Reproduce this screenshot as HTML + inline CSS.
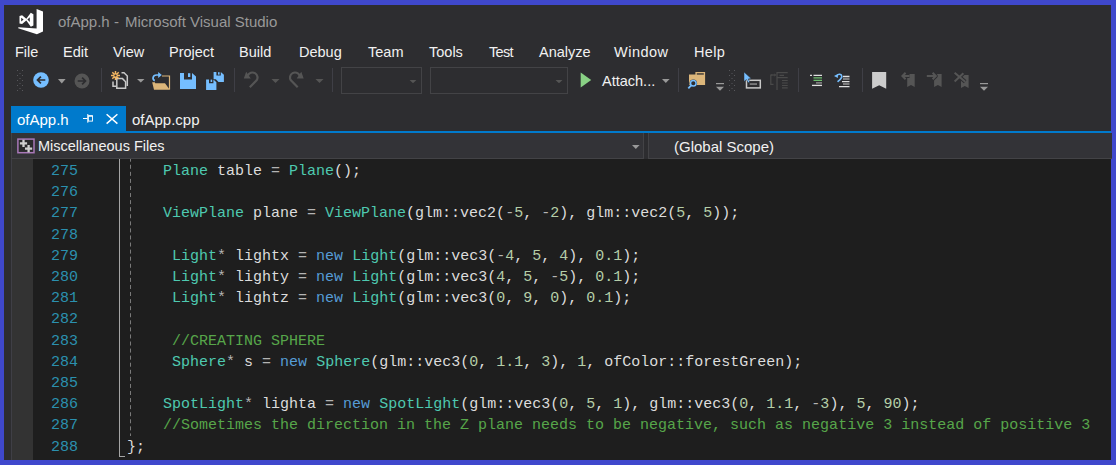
<!DOCTYPE html>
<html><head><meta charset="utf-8">
<style>
html,body{margin:0;padding:0;}
body{width:1116px;height:465px;background:#3f48cc;position:relative;overflow:hidden;font-family:"Liberation Sans",sans-serif;}
.a{position:absolute;}
.t{position:absolute;white-space:pre;line-height:1;}
.menu{color:#f1f1f1;font-size:14.5px;top:45px;}
.code{font-family:"Liberation Mono",monospace;font-size:15px;white-space:pre;color:#dcdcdc;}
.ln{position:absolute;left:33px;width:45px;text-align:right;color:#2b91af;font-family:"Liberation Mono",monospace;font-size:15px;}
.ty{color:#4ec9b0}.kw{color:#569cd6}.nm{color:#b5cea8}.cm{color:#57a64a}.op{color:#b4b4b4}
</style></head><body>
<div class="a" style="left:4px;top:5px;width:1107px;height:455px;background:#2d2d30"></div>

<!-- title bar -->
<div class="t" id="title" style="left:58px;top:14px;color:#999;font-size:15px;">ofApp.h -</div>
<div class="t" id="title2" style="left:125px;top:14px;color:#999;font-size:15px;">Microsoft Visual Studio</div>

<!-- menu -->
<div class="t menu" id="m_file" style="left:15px">File</div>
<div class="t menu" style="left:63px">Edit</div>
<div class="t menu" style="left:113px">View</div>
<div class="t menu" style="left:169px">Project</div>
<div class="t menu" style="left:239px">Build</div>
<div class="t menu" style="left:299px">Debug</div>
<div class="t menu" style="left:368px">Team</div>
<div class="t menu" style="left:429px">Tools</div>
<div class="t menu" style="left:489px;letter-spacing:-0.7px">Test</div>
<div class="t menu" style="left:539px">Analyze</div>
<div class="t menu" style="left:614px;letter-spacing:0.5px">Window</div>
<div class="t menu" style="left:694px;letter-spacing:0.3px">Help</div>

<!-- toolbar text -->
<div class="t" id="attach" style="left:602px;top:74px;color:#f1f1f1;font-size:14.5px;">Attach...</div>

<!-- tabs -->
<div class="a" style="left:11px;top:106px;width:115px;height:27px;background:#007acc"></div>
<div class="a" style="left:11px;top:131px;width:1100px;height:2px;background:#007acc"></div>
<div class="t" id="tab1" style="left:17px;top:112px;color:#fff;font-size:15px;">ofApp.h</div>
<div class="t" id="tab2" style="left:132px;top:112px;color:#f1f1f1;font-size:15px;">ofApp.cpp</div>

<!-- nav bar -->
<div class="a" style="left:11px;top:133px;width:631px;height:25px;background:#333337;border-left:1px solid #434346;border-bottom:1px solid #434346;border-right:1px solid #434346;"></div>
<div class="a" style="left:648px;top:133px;width:463px;height:25px;background:#333337;border-left:1px solid #434346;border-bottom:1px solid #434346;"></div>
<div class="t" id="misc" style="left:38px;top:139px;color:#f1f1f1;font-size:14.5px;">Miscellaneous Files</div>
<div class="t" id="glob" style="left:674px;top:139px;color:#f1f1f1;font-size:15px;">(Global Scope)</div>

<!-- editor -->
<div class="a" style="left:11px;top:159px;width:1px;height:301px;background:#3f3f46"></div>
<div class="a" style="left:12px;top:159px;width:21px;height:301px;background:#333333"></div>
<div class="a" style="left:33px;top:159px;width:1078px;height:301px;background:#1e1e1e"></div>

<!-- code -->
<div class="ln" style="top:161px;line-height:21.2px;">275<br>276<br>277<br>278<br>279<br>280<br>281<br>282<br>283<br>284<br>285<br>286<br>287<br>288</div>
<div class="a code" id="code" style="left:127px;top:161px;line-height:21.2px;"><span class="op">    </span><span class="ty">Plane</span> table <span class="op">=</span> <span class="ty">Plane</span>();

    <span class="ty">ViewPlane</span> plane <span class="op">=</span> <span class="ty">ViewPlane</span>(glm::vec2(<span class="op">-</span><span class="nm">5</span>, <span class="op">-</span><span class="nm">2</span>), glm::vec2(<span class="nm">5</span>, <span class="nm">5</span>));

     <span class="ty">Light</span><span class="op">*</span> lightx <span class="op">=</span> <span class="kw">new</span> <span class="ty">Light</span>(glm::vec3(<span class="op">-</span><span class="nm">4</span>, <span class="nm">5</span>, <span class="nm">4</span>), <span class="nm">0.1</span>);
     <span class="ty">Light</span><span class="op">*</span> lighty <span class="op">=</span> <span class="kw">new</span> <span class="ty">Light</span>(glm::vec3(<span class="nm">4</span>, <span class="nm">5</span>, <span class="op">-</span><span class="nm">5</span>), <span class="nm">0.1</span>);
     <span class="ty">Light</span><span class="op">*</span> lightz <span class="op">=</span> <span class="kw">new</span> <span class="ty">Light</span>(glm::vec3(<span class="nm">0</span>, <span class="nm">9</span>, <span class="nm">0</span>), <span class="nm">0.1</span>);

     <span class="cm">//CREATING SPHERE</span>
     <span class="ty">Sphere</span><span class="op">*</span> s <span class="op">=</span> <span class="kw">new</span> <span class="ty">Sphere</span>(glm::vec3(<span class="nm">0</span>, <span class="nm">1.1</span>, <span class="nm">3</span>), <span class="nm">1</span>, ofColor::forestGreen);

    <span class="ty">SpotLight</span><span class="op">*</span> lighta <span class="op">=</span> <span class="kw">new</span> <span class="ty">SpotLight</span>(glm::vec3(<span class="nm">0</span>, <span class="nm">5</span>, <span class="nm">1</span>), glm::vec3(<span class="nm">0</span>, <span class="nm">1.1</span>, <span class="op">-</span><span class="nm">3</span>), <span class="nm">5</span>, <span class="nm">90</span>);
    <span class="cm">//Sometimes the direction in the Z plane needs to be negative, such as negative 3 instead of positive 3</span>
};</div>

<!-- ICONS overlay -->
<svg class="a" style="left:0;top:0" width="1116" height="465" viewBox="0 0 1116 465">
  <!-- VS logo -->
  <path fill="#fff" d="M36.6 8.9 L43 11.5 L43 31.5 L36.9 34.2 L18.2 28.2 L18.4 27.2 L36.6 28.4 Z"/>
  <path fill="#fff" fill-rule="evenodd" d="M19.5 16 L22.1 15.2 L26.3 18.7 L30.8 12.8 L33.4 14.2 L33.4 25.6 L30.8 26.8 L26.3 20.5 L22.1 24 L19.5 23.4 Z M21.2 17.8 L23.6 19.6 L21.2 21.4 Z M27.4 19.6 L29.8 17.2 L29.8 22 Z"/>

  <!-- toolbar grip -->
  <g fill="#58585c">
    <rect x="17" y="70" width="1" height="1"/><rect x="22" y="70" width="1" height="1"/>
    <rect x="17" y="75" width="1" height="1"/><rect x="22" y="75" width="1" height="1"/>
    <rect x="17" y="80" width="1" height="1"/><rect x="22" y="80" width="1" height="1"/>
    <rect x="17" y="85" width="1" height="1"/><rect x="22" y="85" width="1" height="1"/>
    <rect x="17" y="90" width="1" height="1"/><rect x="22" y="90" width="1" height="1"/>
    <rect x="19.5" y="73" width="1" height="1"/><rect x="19.5" y="78" width="1" height="1"/>
    <rect x="19.5" y="83" width="1" height="1"/><rect x="19.5" y="88" width="1" height="1"/>
  </g>
  <!-- back / forward -->
  <circle cx="41" cy="80" r="7.8" fill="#75beff"/>
  <path d="M45.3 80 H37.8 M40.9 76.6 L37.5 80 L40.9 83.4" stroke="#2d2d30" stroke-width="1.7" fill="none"/>
  <path d="M58 79 H65.6 L61.8 83.4 Z" fill="#999"/>
  <circle cx="82" cy="81" r="7.5" fill="#555"/>
  <path d="M77.7 81 H85.2 M82.1 77.6 L85.5 81 L82.1 84.4" stroke="#2d2d30" stroke-width="1.7" fill="none"/>
  <!-- separators -->
  <g fill="#3f3f46">
    <rect x="101" y="68" width="1" height="24"/>
    <rect x="234" y="68" width="1" height="24"/>
    <rect x="332" y="68" width="1" height="24"/>
    <rect x="678" y="68" width="1" height="24"/>
    <rect x="798" y="68" width="1" height="24"/>
    <rect x="862" y="68" width="1" height="24"/>
  </g>

  <!-- new project -->
  <g stroke="#c8c8c8" stroke-width="1.5" fill="none">
    <path d="M113 81.5 V86.2 H116"/>
    <path d="M121.5 72.8 H124 L127.3 76 V86"/>
    <path d="M116.8 88.2 V78.6 H122.5 L125.6 81.7 V88.2 Z" fill="#2d2d30"/>
  </g>
  <g stroke="#f2b562" stroke-width="1.5">
    <path d="M115.5 71 V80 M111 75.5 H120 M112.3 72.3 L118.7 78.7 M118.7 72.3 L112.3 78.7"/>
  </g>
  <circle cx="115.5" cy="75.5" r="1.1" fill="#2d2d30"/>
  <path d="M137 79 H144.5 L140.75 82.6 Z" fill="#999"/>
  <!-- open folder -->
  <path d="M162 76 H169.5 V89.5" stroke="#dcb67a" stroke-width="1.2" fill="none"/>
  <path d="M152.2 82.3 H154.8 L155.3 83.3 H165 L169.8 89.8 H154 Z" fill="#dcb67a"/>
  <path d="M154.8 80.6 C152 79.5 152.5 75.2 156.5 75 H160" stroke="#75beff" stroke-width="1.7" fill="none"/>
  <path d="M158.2 72 L161.8 75 L158.2 78 Z" fill="#75beff"/>
  <!-- save -->
  <path d="M180 73 H184 V79.6 H192 V73 L196 76.6 V89 H180 Z" fill="#75beff"/>
  <rect x="188" y="73.2" width="2.3" height="3.8" fill="#75beff"/>
  <!-- save all -->
  <path d="M213.6 72 H216.4 V75.5 H220.8 V72 L223.9 74.8 V81.9 H218.5 L215.8 79.3 H213.6 Z" fill="#75beff"/>
  <rect x="218" y="72.2" width="1.6" height="2.4" fill="#75beff"/>
  <path d="M206.1 79.4 H209 V83.2 H213.4 V79.4 L216.4 82.2 V89.9 H206.1 Z" fill="#75beff" stroke="#2d2d30" stroke-width="0.8" paint-order="stroke"/>
  <rect x="210.6" y="79.6" width="1.6" height="2.4" fill="#75beff"/>
  <!-- undo / redo -->
  <g id="undo">
    <path d="M246.2 71.8 L243.8 78.6 L250.8 78.6 Z" fill="#555"/>
    <path d="M247.9 75.6 A5 5 0 1 1 256.6 80.4 L249.8 87.2" stroke="#555" stroke-width="2.2" fill="none"/>
  </g>
  <use href="#undo" transform="translate(547.5 0) scale(-1 1)"/>
  <path d="M271.5 79 H279.5 L275.5 83 Z M315.5 79 H323.5 L319.5 83 Z" fill="#555"/>
  <!-- combos -->
  <rect x="341.5" y="67.5" width="80" height="26" fill="none" stroke="#434346"/>
  <path d="M409.6 80 H416.4 L413 83.3 Z" fill="#555"/>
  <rect x="430.5" y="67.5" width="137" height="26" fill="none" stroke="#434346"/>
  <path d="M555.5 80 H562.5 L559 83.3 Z" fill="#555"/>
  <!-- play -->
  <path d="M580.7 72.6 V87.4 L591.2 80 Z" fill="#89d185"/>
  <path d="M662 79 H669.6 L665.8 83 Z" fill="#999"/>
  <!-- folder search -->
  <path d="M689 74.4 H695.4 V72 H705.1 V85 H689 Z" fill="#dcb67a"/>
  <rect x="696.8" y="73.3" width="7" height="1.3" fill="#2d2d30"/>
  <circle cx="693.3" cy="83.2" r="3.8" fill="#2d2d30"/>
  <circle cx="693.3" cy="83.2" r="2.8" fill="none" stroke="#75beff" stroke-width="1.5"/>
  <path d="M691.2 85.4 L688.3 88.4" stroke="#75beff" stroke-width="1.8"/>
  <!-- overflow 1 -->
  <rect x="716" y="83" width="8" height="1.2" fill="#999"/>
  <path d="M716 86.8 H724 L720 90.8 Z" fill="#999"/>
  <!-- grip 2 -->
  <g fill="#58585c">
    <rect x="729" y="70" width="1" height="1"/><rect x="734" y="70" width="1" height="1"/>
    <rect x="729" y="75" width="1" height="1"/><rect x="734" y="75" width="1" height="1"/>
    <rect x="729" y="80" width="1" height="1"/><rect x="734" y="80" width="1" height="1"/>
    <rect x="729" y="85" width="1" height="1"/><rect x="734" y="85" width="1" height="1"/>
    <rect x="729" y="90" width="1" height="1"/><rect x="734" y="90" width="1" height="1"/>
    <rect x="731.5" y="73" width="1" height="1"/><rect x="731.5" y="78" width="1" height="1"/>
    <rect x="731.5" y="83" width="1" height="1"/><rect x="731.5" y="88" width="1" height="1"/>
  </g>
  <!-- cursor box -->
  <rect x="746.5" y="80.3" width="13.8" height="7.6" fill="none" stroke="#c8c8c8" stroke-width="1.5"/>
  <rect x="749.7" y="83.4" width="7.3" height="1.3" fill="#999"/>
  <path d="M744 72 V81.6 L746.4 79.6 L748.2 82.8 L749.8 82 L748.2 79 L751.2 78.6 Z" fill="#75beff" stroke="#2d2d30" stroke-width="0.5"/>
  <!-- disabled icon -->
  <g fill="none" stroke="#4a4a4a" stroke-width="1.2">
    <path d="M772.5 75 H770.8 V84.3 H773.5"/>
    <path d="M771 75 H775.5"/>
    <path d="M777 72 V90 M777 72.6 H787.7 M779.5 75.3 H784 M777 77.6 H787.7 M782 80.5 H787.7 M782 83 H787.7 M782 85.5 H787.7 M782 87.8 H787.7"/>
  </g>
  <path d="M774.5 73.3 L776 75 L774.5 76.7 Z" fill="#4a4a4a"/>
  <!-- comment -->
  <g stroke-width="1.3">
    <path d="M810 75.3 H812 M813.5 75.3 H822" stroke="#e0e0e0"/>
    <path d="M813.5 77.8 H822 M813.5 80.4 H822" stroke="#6dbf6d"/>
    <path d="M816 82.9 H822" stroke="#999"/>
    <path d="M812 85.4 H822" stroke="#e0e0e0"/>
  </g>
  <!-- uncomment -->
  <g stroke-width="1.3">
    <path d="M843 76.5 H849.5 M842 81.6 H849.5 M839 86.6 H849.5" stroke="#e0e0e0"/>
    <path d="M843 79 H849.5 M843 84 H849.5" stroke="#999"/>
  </g>
  <path d="M836.8 75.8 C838.3 73.3 841.6 73.9 841.8 76.3 C842 78.5 839.5 80.2 837.6 81.8" stroke="#75beff" stroke-width="1.6" fill="none"/>
  <path d="M834 76 L837.8 74 L837.9 77.9 Z" fill="#75beff"/>
  <!-- bookmarks -->
  <path d="M872.1 72.1 H886.2 V88.8 L879.2 85.2 L872.1 88.8 Z" fill="#cccccc"/>
  <g fill="#555">
    <path d="M907.2 73.9 H914.7 V87.1 L911 84.9 L907.2 87.1 Z"/>
    <path d="M934.1 73.9 H941.6 V87.1 L937.9 84.9 L934.1 87.1 Z"/>
    <path d="M961 75 H968.6 V88 L964.8 86 L961 88 Z"/>
  </g>
  <g stroke="#2d2d30" stroke-width="4" fill="none" stroke-linejoin="round">
    <path d="M909.5 76 H902.8 M905.6 72.8 L902.4 76 L905.6 79.2"/>
    <path d="M926.8 76 H935.2 M932.6 72.8 L935.8 76 L932.6 79.2"/>
    <path d="M954.6 72.8 L965.2 81.8 M954.6 81.4 L963.4 73.2"/>
  </g>
  <g stroke="#555" stroke-width="2" fill="none">
    <path d="M909.5 76 H902.8 M905.6 72.8 L902.4 76 L905.6 79.2"/>
    <path d="M926.8 76 H935.2 M932.6 72.8 L935.8 76 L932.6 79.2"/>
    <path d="M954.6 72.8 L965.2 81.8 M954.6 81.4 L963.4 73.2"/>
  </g>
  <!-- overflow 2 -->
  <rect x="980" y="83" width="8" height="1.2" fill="#999"/>
  <path d="M980 86.8 H988 L984 90.8 Z" fill="#999"/>

  <!-- tab pin & close -->
  <g stroke="#fff" fill="none">
    <path d="M83 118.5 H87.5" stroke-width="1"/>
    <path d="M87.8 114 V122.7" stroke-width="1"/>
    <rect x="88.3" y="115.8" width="4.2" height="5.3" stroke-width="0.9"/>
    <path d="M88.3 116 H92.7" stroke-width="1.3"/>
    <path d="M106.6 114.2 L117.4 123.6 M117.4 114.2 L106.6 123.6" stroke-width="1.5"/>
  </g>
  <!-- nav combo arrow -->
  <path d="M632 145 H639.6 L635.8 149 Z" fill="#999"/>
  <!-- misc files icon -->
  <rect x="17.9" y="139.1" width="16.1" height="13.6" fill="#2a2a2c" stroke="#a878b8" stroke-width="1.5"/>
  <path d="M23.5 139.7 V147 M19.9 143.4 H27.1 M28.6 145 V152.2 M25 148.6 H32.2" stroke="#d0d0d0" stroke-width="2.3"/>

  <!-- outlining -->
  <rect x="119" y="159" width="1" height="297" fill="#a5a5a5"/>
  <rect x="119" y="456" width="6" height="1" fill="#a5a5a5"/>
  <line x1="130.5" y1="159" x2="130.5" y2="436" stroke="#7a7a7a" stroke-width="1" stroke-dasharray="4 3.07" stroke-dashoffset="1.3"/>
</svg>
</body></html>
